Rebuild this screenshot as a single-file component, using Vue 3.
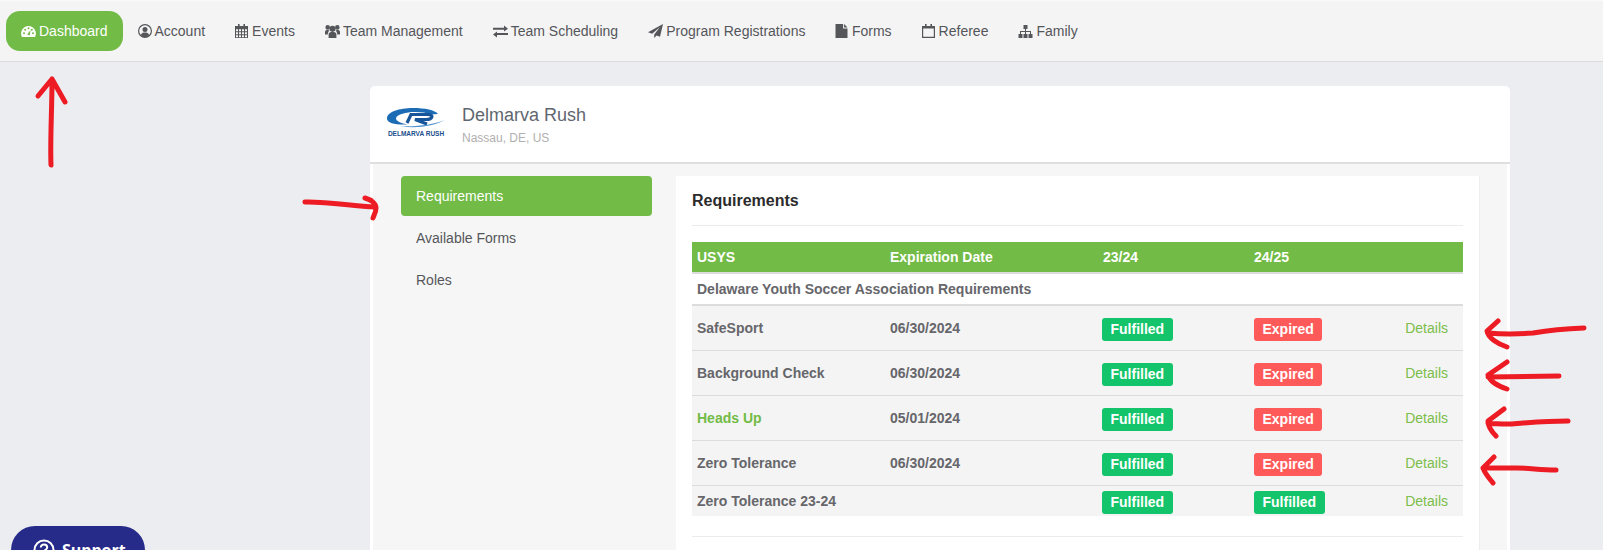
<script setup>
const circ = (x, y, r) => `M${x - r} ${y}a${r} ${r} 0 1 0 ${2 * r} 0a${r} ${r} 0 1 0 ${-2 * r} 0Z`

const calendarCells = () => {
  let d = ""
  for (const y of [5.2, 8.2, 11.2]) {
    for (const x of [1, 4, 7, 10]) d += `M${x} ${y}h2v2h-2Z`
  }
  return d
}

const rings = "M3 0h1.6v2H3ZM8.4 0H10v2H8.4Z"

// w is the icon box, pad the blank space on its left
const navItems = [
  {
    label: "Dashboard", w: 15, active: true,
    d: "M1 13A7.4 7.4 0 1 1 14 13Z" + circ(3, 9.2, 1) + circ(4.2, 5.8, 1) + circ(7.5, 4.2, 1) + circ(10.8, 5.8, 1) + circ(12, 9.2, 1) + "M6.2 10.4L9.6 6L8.7 11.4Z",
  },
  {
    label: "Account", w: 14,
    d: circ(7, 7, 7) + circ(7, 7, 5.8) + circ(7, 5.6, 2.5) + "M2.9 11C3.5 9 5 8.5 7 8.5S10.5 9 11.1 11C10 12.2 8.5 12.8 7 12.8S4 12.2 2.9 11Z",
  },
  { label: "Events", w: 14, d: "M0 2H13V14H0Z" + calendarCells() + rings },
  {
    label: "Team Management", w: 15,
    d: circ(7.5, 4.8, 3) + "M3.6 14V10.4C3.6 8.6 5.2 7.8 7.5 7.8S11.4 8.6 11.4 10.4V14Z" + circ(2.7, 3.4, 2.3) + circ(12.3, 3.4, 2.3) +
      "M0 10.6V8C0 6.4 1 6 2.7 6C3.6 6 4.2 6.2 4.5 6.6C3.4 7.4 2.8 8.8 2.8 10.6ZM15 10.6V8C15 6.4 14 6 12.3 6C11.4 6 10.8 6.2 10.5 6.6C11.6 7.4 12.2 8.8 12.2 10.6Z",
  },
  {
    label: "Team Scheduling", w: 15,
    d: "M0 3.8H11V1.6L15 4.8L11 7.6V5.8H0ZM15 9H4V7.6L0 10.6L4 13.6V11H15Z",
  },
  {
    label: "Program Registrations", w: 15,
    d: "M15 0L0 8.2L4.2 9.8L12 3L6.2 10.6V14L8.6 11.4L12 12.8Z",
  },
  { label: "Forms", w: 13.5, pad: 0.5, d: "M0 0H7.6V4.6H12V14H0ZM8.6 0L12 3.6H8.6Z" },
  { label: "Referee", w: 14, d: "M0 2H13V14H0ZM1.2 4.4H11.8V12.8H1.2Z" + rings },
  {
    label: "Family", w: 15,
    d: "M5.5 1H9.5V5H5.5ZM7 5H8V7H13V10H12V8H8V10H7V8H3V10H2V7H7ZM0.5 10H4.5V14H0.5ZM5.5 10H9.5V14H5.5ZM10.5 10H14.5V14H10.5Z",
  },
]

const sideItems = [
  { label: "Requirements", active: true },
  { label: "Available Forms" },
  { label: "Roles" },
]

const rows = [
  { name: "SafeSport", date: "06/30/2024", first: "Fulfilled", second: "Expired" },
  { name: "Background Check", date: "06/30/2024", first: "Fulfilled", second: "Expired" },
  { name: "Heads Up", date: "05/01/2024", first: "Fulfilled", second: "Expired", link: true },
  { name: "Zero Tolerance", date: "06/30/2024", first: "Fulfilled", second: "Expired" },
  { name: "Zero Tolerance 23-24", date: "", first: "Fulfilled", second: "Fulfilled", short: true },
]

// hand-drawn red marks on top of the screenshot
const marks = [
  "M51 165C50 140 52 110 52 80M38 96L52 79L65 102",
  "M305 202C320 201 340 205 374 207M365 198C372 200 376 204 376 208C376 212 374 215 373 218",
  "M1584 328C1560 329 1545 331 1533 333C1520 334 1500 334 1488 333M1498 321L1487 331C1488 338 1498 344 1507 347",
  "M1559 376L1488 377M1507 362L1488 375C1490 382 1498 386 1507 389",
  "M1568 421C1545 421 1525 423 1510 424C1500 424 1494 424 1488 423M1504 409L1488 421C1488 427 1492 432 1496 436",
  "M1556 470C1540 470 1530 468 1517 468C1505 468 1495 468 1483 468M1494 457L1483 468C1485 474 1490 479 1493 483",
]
</script>

<template>
  <div class="page">
    <nav class="topbar">
      <a v-for="item in navItems" :key="item.label" class="nav-item" :class="{ active: item.active }">
        <svg class="nav-icon" :width="item.w" height="14" :viewBox="`${-(item.pad || 0)} 0 ${item.w} 14`">
          <path :d="item.d" fill="currentColor" fill-rule="evenodd" />
        </svg>
        <span>{{ item.label }}</span>
      </a>
    </nav>

    <main class="content">
      <section class="card">
        <header class="club">
          <div class="logo">
            <svg width="60" height="20" viewBox="0 0 60 20">
              <path d="M1 10.5C1 4 13 0 27 0C39 0 49 2 52 6L45 6.5C41 4.8 35 4 29 4C20 4 11 6.5 10 10C9.5 13 15 15.5 22 16.5C10 17 1 15.5 1 10.5Z" fill="#1c6cb5" />
              <path d="M21 15L25 6.5H42C48 6.5 47 11.5 40 11.5H29L41 16" fill="none" stroke="#17559b" stroke-width="3.2" />
              <path d="M14 18C30 19 46 17 59 12C48 18 30 21 14 18Z" fill="#4d8fcb" />
            </svg>
            <span class="logo-name">DELMARVA RUSH</span>
          </div>
          <div>
            <div class="club-name">Delmarva Rush</div>
            <div class="club-place">Nassau, DE, US</div>
          </div>
        </header>

        <div class="card-body">
          <aside class="side-menu">
            <a v-for="item in sideItems" :key="item.label" class="side-item" :class="{ active: item.active }">{{ item.label }}</a>
          </aside>

          <div class="panel">
            <h2 class="panel-title">Requirements</h2>
            <table class="req-table">
              <colgroup>
                <col style="width: 193px" />
                <col style="width: 213px" />
                <col style="width: 151px" />
                <col style="width: 120px" />
                <col />
              </colgroup>
              <thead>
                <tr>
                  <th>USYS</th>
                  <th>Expiration Date</th>
                  <th>23/24</th>
                  <th>24/25</th>
                  <th></th>
                </tr>
              </thead>
              <tbody>
                <tr class="group-row">
                  <td colspan="5">Delaware Youth Soccer Association Requirements</td>
                </tr>
                <tr v-for="row in rows" :key="row.name" class="req-row" :class="{ short: row.short }">
                  <td :class="{ 'name-link': row.link }">{{ row.name }}</td>
                  <td>{{ row.date }}</td>
                  <td><span class="badge first" :class="row.first.toLowerCase()">{{ row.first }}</span></td>
                  <td><span class="badge" :class="row.second.toLowerCase()">{{ row.second }}</span></td>
                  <td class="details"><a>Details</a></td>
                </tr>
              </tbody>
            </table>
            <div class="panel-rule"></div>
          </div>
        </div>
      </section>
    </main>

    <button class="support">
      <svg width="22" height="22" viewBox="0 0 22 22">
        <circle cx="11" cy="11" r="9.5" fill="none" stroke="#fff" stroke-width="2" />
        <path d="M7.8 8.6C7.8 6.6 9.3 5.6 11 5.6C12.8 5.6 14.2 6.7 14.2 8.4C14.2 10.6 11 10.8 11 13" fill="none" stroke="#fff" stroke-width="2" />
      </svg>
      Support
    </button>

    <svg class="marks" width="1603" height="550" viewBox="0 0 1603 550">
      <path v-for="d in marks" :key="d" :d="d" fill="none" stroke="#ed1c24" stroke-width="5" stroke-linecap="round" stroke-linejoin="round" />
    </svg>
  </div>
</template>

<style>
html, body {
  margin: 0;
  background: #ecedf1;
}
</style>

<style scoped>
.page {
  position: relative;
  height: 550px;
  overflow: hidden;
  background: #ecedf1;
  font-family: "Liberation Sans", Arial, sans-serif;
  font-size: 14px;
  color: #55565a;
}

.topbar {
  display: flex;
  align-items: center;
  box-sizing: border-box;
  height: 62px;
  padding: 0 6px 1px;
  background: #f4f4f5;
  border-top: 1px solid #f9f9f9;
  border-bottom: 1px solid #dcdcdf;
}

.nav-item {
  display: flex;
  align-items: center;
  height: 40px;
  padding: 0 15px;
  white-space: nowrap;
}

.nav-item.active {
  background: #72bb46;
  border-radius: 14px;
  color: #fff;
}

.nav-icon {
  margin-right: 3px;
}

.content {
  padding: 24px 0 0 370px;
}

.card {
  width: 1140px;
  background: #fff;
  border-radius: 5px 5px 0 0;
}

.club {
  display: flex;
  align-items: center;
  box-sizing: border-box;
  height: 78px;
  padding-left: 16px;
  border-bottom: 2px solid #dfdfdf;
}

.logo {
  display: flex;
  flex-direction: column;
  align-items: center;
  width: 60px;
  margin-right: 16px;
  padding-bottom: 4px;
}

.logo-name {
  margin-top: 2px;
  font-size: 6.5px;
  font-weight: 700;
  color: #1d4f8c;
  white-space: nowrap;
}

.club-name {
  font-size: 18px;
  line-height: 24px;
  color: #5f6670;
}

.club-place {
  margin-top: 4px;
  font-size: 12px;
  line-height: 14px;
  color: #b0b0b0;
}

.card-body {
  display: flex;
  margin: 0 3px;
  padding: 12px 28px 0;
  height: 400px;
  background: #f6f6f6;
}

.side-menu {
  display: flex;
  flex-direction: column;
  gap: 2px;
  flex: none;
  width: 251px;
  margin-right: 24px;
}

.side-item {
  box-sizing: border-box;
  height: 40px;
  padding-left: 15px;
  line-height: 40px;
  border-radius: 4px;
}

.side-item.active {
  background: #72bb46;
  color: #fff;
}

.panel {
  flex: 1;
  padding: 0 16px;
  background: #fff;
  border-right: 1px solid #ededed;
}

.panel-title {
  margin: 0;
  height: 49px;
  font-size: 16px;
  line-height: 50px;
  font-weight: 700;
  color: #2b2b2b;
  border-bottom: 1px solid #ececec;
}

.req-table {
  width: 771px;
  margin-top: 16px;
  table-layout: fixed;
  border-collapse: separate;
  border-spacing: 0;
  font-weight: 700;
  color: #66666b;
}

.req-table th {
  box-sizing: border-box;
  height: 32px;
  padding: 0 5px;
  text-align: left;
  color: #fff;
  background: #72bb46;
  background-clip: padding-box;
  border-bottom: 2px solid #dcdcdc;
}

.req-table td {
  box-sizing: border-box;
  padding: 0 5px;
}

.group-row td {
  height: 32px;
  border-bottom: 2px solid #dcdcdc;
}

.req-row td {
  height: 45px;
  background: #f4f4f4;
  border-bottom: 1px solid #dcdcdc;
}

.req-row:last-child td {
  border-bottom: 0;
}

.req-row.short td {
  height: 30px;
}

.req-row .name-link {
  color: #72bb46;
}

.badge {
  display: inline-block;
  box-sizing: border-box;
  height: 23px;
  margin-top: 2px;
  padding: 0 8.5px;
  line-height: 23px;
  vertical-align: middle;
  border-radius: 3px;
  color: #fff;
}

.badge.first {
  margin-left: -1px;
}

.badge.fulfilled {
  background: #13c46a;
}

.badge.expired {
  background: #ff5a5a;
}

.req-row .details {
  padding-right: 15px;
  text-align: right;
  font-weight: 400;
  color: #7cbd4b;
}

.panel-rule {
  margin-top: 20px;
  border-top: 1px solid #ececec;
}

.support {
  position: absolute;
  left: 11px;
  top: 526px;
  display: flex;
  align-items: center;
  gap: 7px;
  width: 134px;
  height: 48px;
  padding: 0 0 0 22px;
  border: 0;
  border-radius: 24px;
  background: #262b89;
  color: #fff;
  font-family: "Open Sans", sans-serif;
  font-size: 16px;
  font-weight: 700;
}

.marks {
  position: absolute;
  left: 0;
  top: 0;
  pointer-events: none;
}
</style>
